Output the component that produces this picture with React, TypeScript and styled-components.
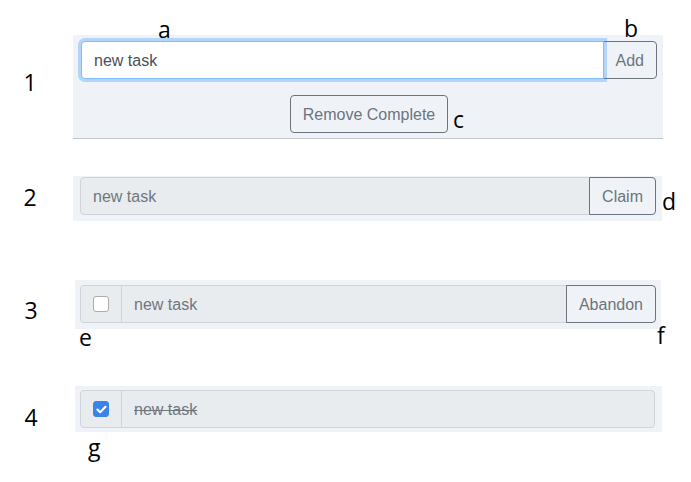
import React from "react";
import styled, { createGlobalStyle, css } from "styled-components";

const Global = createGlobalStyle`
  html, body { margin: 0; padding: 0; background: #ffffff; }
  body { font-family: "Liberation Sans", Arial, sans-serif; }
  * { box-sizing: border-box; }
`;

const Page = styled.div`
  position: relative;
  width: 691px;
  height: 482px;
  padding-top: 35px;
  display: flex;
  flex-direction: column;
`;

const Row = styled.div<{ $gap: number }>`
  display: flex;
  align-items: flex-start;
  margin-top: ${(p) => p.$gap}px;
`;

const Num = styled.div<{ $w: number; $dy: number }>`
  width: ${(p) => p.$w}px;
  flex: 0 0 auto;
  padding-right: 13px;
  padding-top: ${(p) => p.$dy}px;
  text-align: center;
  font-family: "Open Sans", sans-serif;
  font-size: 23px;
  line-height: 23px;
  color: #000;
`;

const Note = styled.span<{ $x: number; $y: number }>`
  position: absolute;
  left: ${(p) => p.$x}px;
  top: ${(p) => p.$y}px;
  font-family: "Open Sans", sans-serif;
  font-size: 23px;
  line-height: 23px;
  color: #000;
`;

const Panel = styled.div<{ $w: number; $pad: string; $rule?: boolean }>`
  width: ${(p) => p.$w}px;
  padding: ${(p) => p.$pad};
  background: #eff3f7;
  display: flex;
  flex-direction: column;
  align-items: stretch;
  gap: 16px;
  ${(p) =>
    p.$rule &&
    css`
      border-bottom: 1px solid #c3c6c9;
    `}
`;

const Group = styled.div`
  display: flex;
  height: 38px;
  align-items: stretch;
`;

const Field = styled.div<{ $focus?: boolean; $disabled?: boolean; $joinLeft?: boolean; $joinRight?: boolean; $done?: boolean }>`
  flex: 1 1 auto;
  display: flex;
  align-items: center;
  padding: 1px 12px 0;
  font-size: 16px;
  line-height: 24px;
  border: 1px solid #ced4da;
  border-radius: ${(p) => (p.$joinLeft ? "0" : "4px")} ${(p) => (p.$joinRight ? "0 0" : "4px 4px")}
    ${(p) => (p.$joinLeft ? "0" : "4px")};
  background: ${(p) => (p.$disabled ? "#e9ecef" : "#ffffff")};
  color: ${(p) => (p.$disabled ? "#6f777e" : "#495057")};
  position: relative;
  ${(p) =>
    p.$focus &&
    css`
      border-color: #80bdff;
      box-shadow: 0 0 0 3px rgba(0, 123, 255, 0.25);
      z-index: 2;
    `}
  ${(p) =>
    p.$joinLeft &&
    css`
      margin-left: -1px;
    `}
  ${(p) =>
    p.$done &&
    css`
      text-decoration: line-through;
    `}
`;

const Addon = styled.div`
  flex: 0 0 auto;
  width: 42px;
  display: flex;
  align-items: center;
  justify-content: center;
  background: #e9ecef;
  border: 1px solid #ced4da;
  border-radius: 4px 0 0 4px;
`;

const Box = styled.span<{ $checked?: boolean }>`
  width: 16px;
  height: 16px;
  border-radius: 3px;
  display: flex;
  align-items: center;
  justify-content: center;
  background: ${(p) => (p.$checked ? "#3a83e8" : "#ffffff")};
  border: 1px solid ${(p) => (p.$checked ? "#3a83e8" : "#b3aca6")};
`;

const Button = styled.button<{ $joined?: boolean }>`
  flex: 0 0 auto;
  height: 38px;
  padding: 1px 12px 0;
  font-family: "Liberation Sans", Arial, sans-serif;
  font-size: 16px;
  line-height: 24px;
  color: #6c757d;
  background: transparent;
  border: 1px solid #6c757d;
  border-radius: ${(p) => (p.$joined ? "0 4px 4px 0" : "4px")};
  ${(p) =>
    p.$joined &&
    css`
      margin-left: -1px;
      position: relative;
      z-index: 1;
    `}
`;

const Center = styled.div`
  display: flex;
  justify-content: center;
`;

const Check = () => (
  <svg width="11" height="9" viewBox="0 0 11 9">
    <path d="M1.5 4.6 L4.2 7.2 L9.5 1.8" fill="none" stroke="#ffffff" strokeWidth="2.2" strokeLinecap="round" strokeLinejoin="round" />
  </svg>
);

export default function App() {
  return (
    <>
      <Global />
      <Page>
        <Row $gap={0}>
          <Num $w={73} $dy={36}>1</Num>
          <Panel $w={590} $pad="6px 6px 5px 8px" $rule>
            <Group>
              <Field $focus $joinRight>new task</Field>
              <Button $joined>Add</Button>
            </Group>
            <Center>
              <Button>Remove Complete</Button>
            </Center>
          </Panel>
        </Row>
        <Row $gap={37}>
          <Num $w={73} $dy={10}>2</Num>
          <Panel $w={589} $pad="1px 6px 6px 7px">
            <Group>
              <Field $disabled $joinRight>new task</Field>
              <Button $joined>Claim</Button>
            </Group>
          </Panel>
        </Row>
        <Row $gap={59}>
          <Num $w={75} $dy={19}>3</Num>
          <Panel $w={586} $pad="5px 5px 6px 5px">
            <Group>
              <Addon>
                <Box />
              </Addon>
              <Field $disabled $joinLeft $joinRight>new task</Field>
              <Button $joined>Abandon</Button>
            </Group>
          </Panel>
        </Row>
        <Row $gap={57}>
          <Num $w={75} $dy={20}>4</Num>
          <Panel $w={587} $pad="4px 7px 4px 5px">
            <Group>
              <Addon>
                <Box $checked>
                  <Check />
                </Box>
              </Addon>
              <Field $disabled $joinLeft $done>new task</Field>
            </Group>
          </Panel>
        </Row>
        <Note $x={158} $y={18}>a</Note>
        <Note $x={624} $y={17}>b</Note>
        <Note $x={453} $y={108}>c</Note>
        <Note $x={662} $y={190}>d</Note>
        <Note $x={79} $y={326}>e</Note>
        <Note $x={657} $y={324}>f</Note>
        <Note $x={88} $y={436}>g</Note>
      </Page>
    </>
  );
}
